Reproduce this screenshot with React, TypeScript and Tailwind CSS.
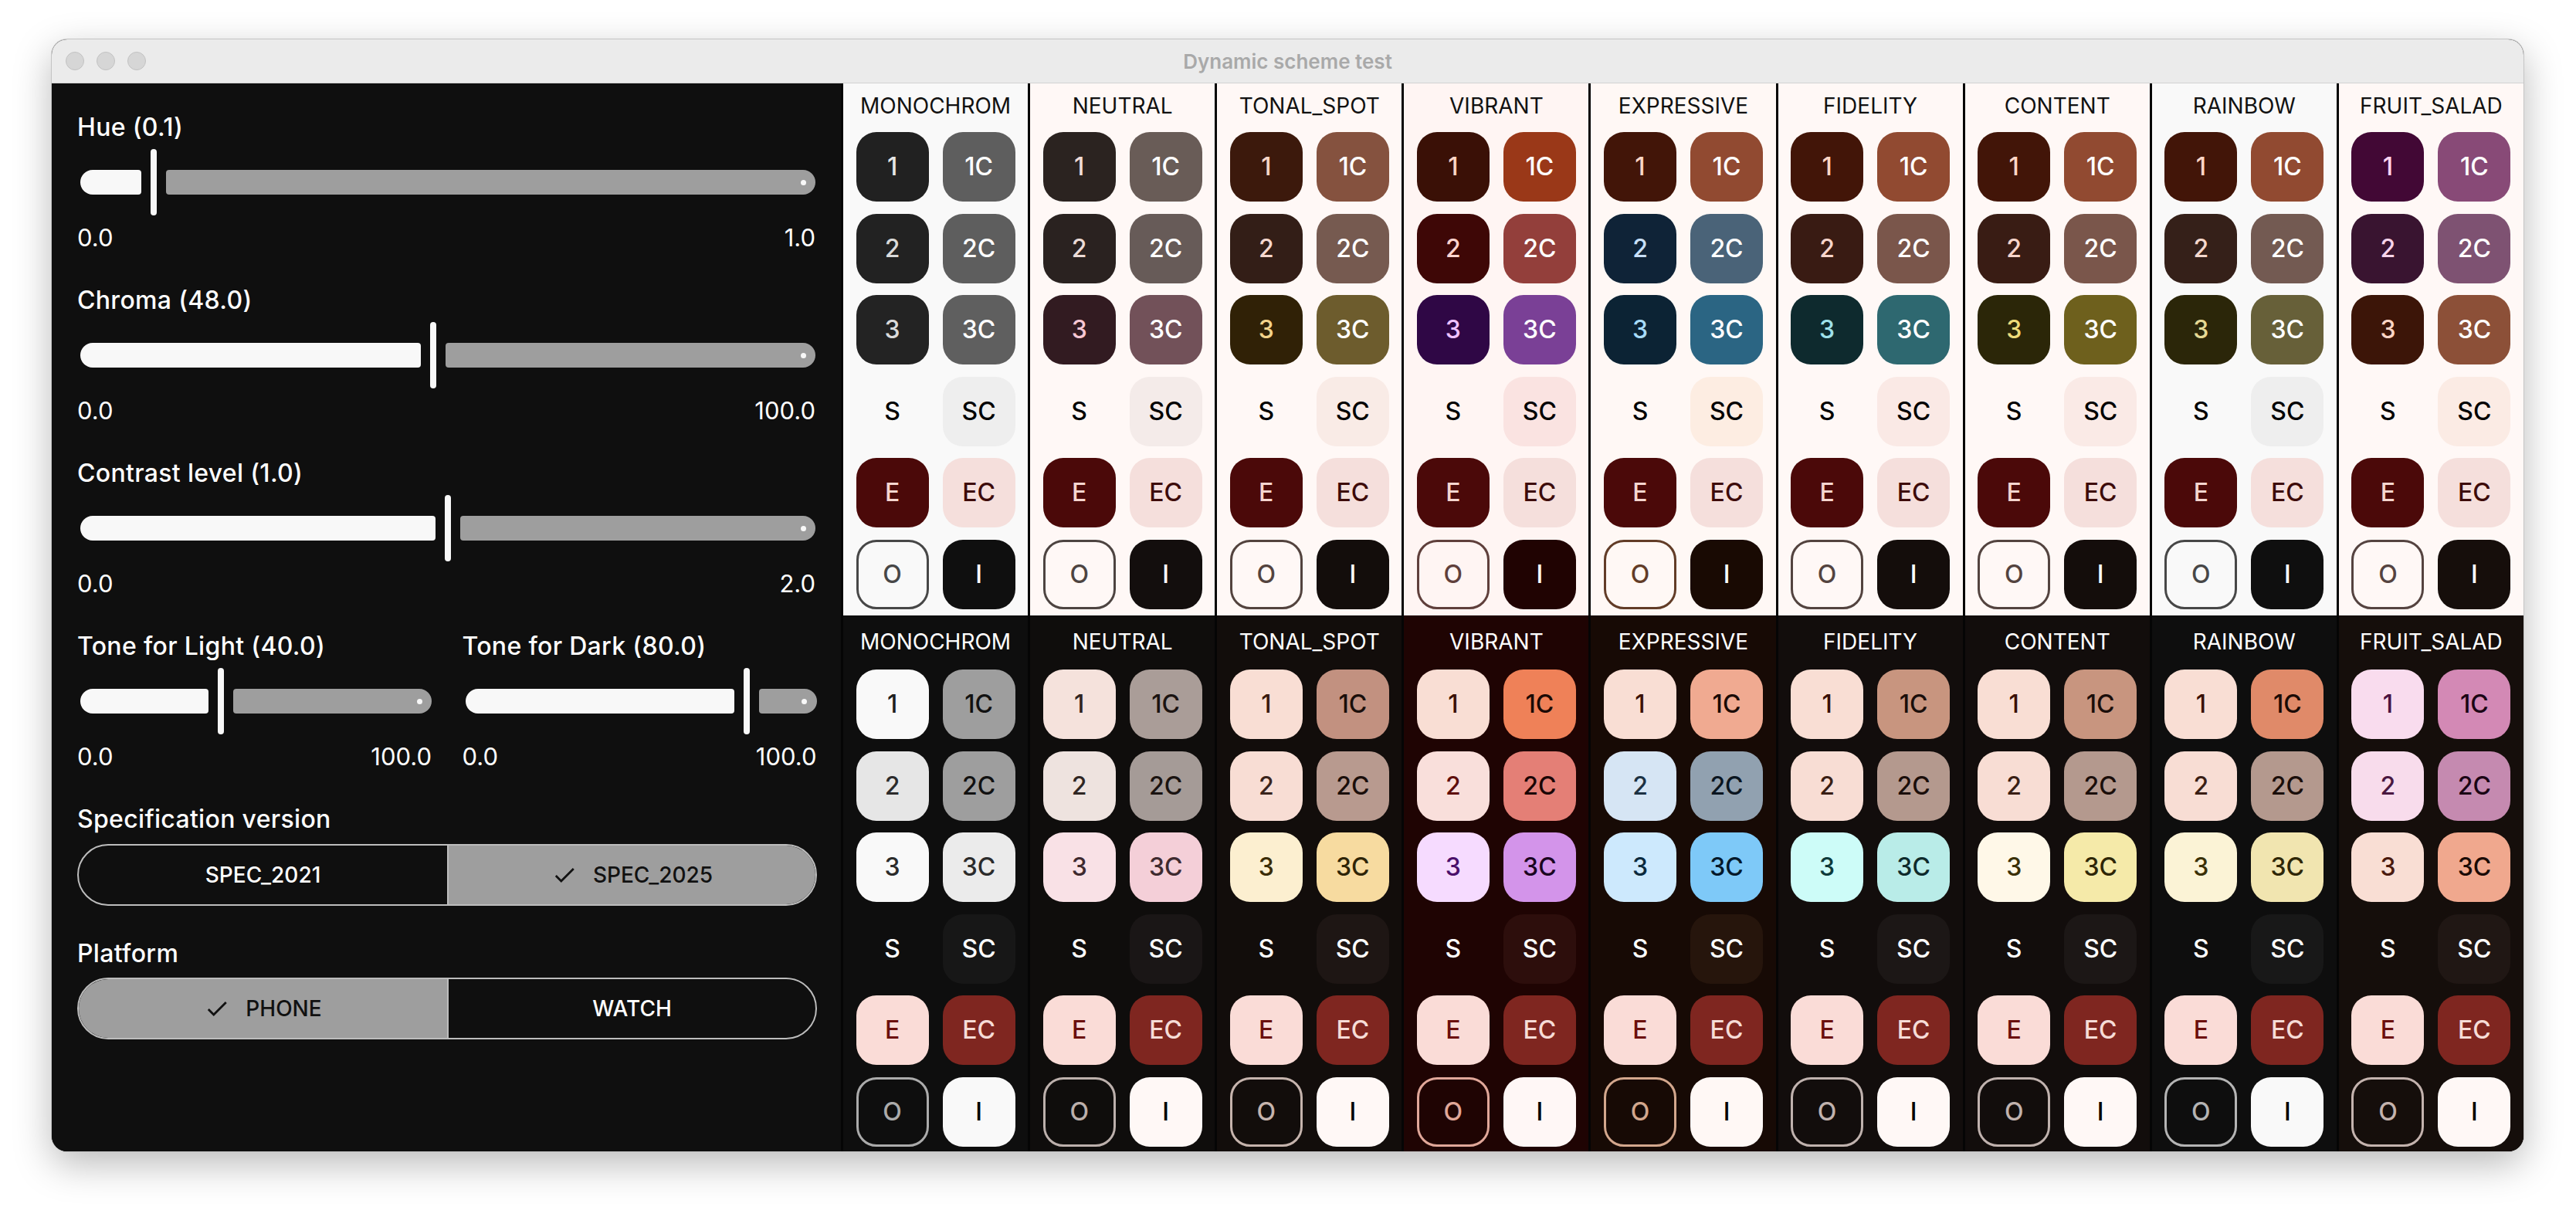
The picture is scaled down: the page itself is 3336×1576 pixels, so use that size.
type Scheme = {
  name: string;
  lightBg: string;
  darkBg: string;
  // 1, 1C, 2, 2C, 3, 3C, SC, O, I
  light: string[];
  dark: string[];
};

const SCHEMES: Scheme[] = [
  {
    name: 'MONOCHROM',
    lightBg: 'bg-[#f9f9f9]',
    darkBg: 'bg-[#0e0e0e]',
    light: [
      'bg-[#212121] text-[#e6e6e6]', 'bg-[#5e5e5e] text-white',
      'bg-[#222222] text-[#dadada]', 'bg-[#5e5e5e] text-white',
      'bg-[#232323] text-[#dadada]', 'bg-[#5f5f5f] text-white',
      'bg-[#eeeeee] text-black', 'border-[#474747] text-[#474747]', 'bg-[#0f0f0f] text-white',
    ],
    dark: [
      'bg-[#f9f9f9] text-[#1f1f1f]', 'bg-[#9e9e9e] text-[#111111]',
      'bg-[#e6e6e6] text-[#2b2b2b]', 'bg-[#9e9e9e] text-[#111111]',
      'bg-[#f9f9f9] text-[#2b2b2b]', 'bg-[#ebebeb] text-[#2b2b2b]',
      'bg-[#171717] text-white', 'border-[#ababab] text-[#ababab]', 'bg-[#f9f9f9] text-black',
    ],
  },
  {
    name: 'NEUTRAL',
    lightBg: 'bg-[#fff8f6]',
    darkBg: 'bg-[#0f0d0c]',
    light: [
      'bg-[#2b2320] text-[#f2ddd8]', 'bg-[#695c57] text-white',
      'bg-[#2a2220] text-[#ecdcd7]', 'bg-[#675b58] text-white',
      'bg-[#321b21] text-[#f7c7d3]', 'bg-[#725159] text-white',
      'bg-[#f4ebe9] text-black', 'border-[#4d4441] text-[#4d4441]', 'bg-[#130e0d] text-white',
    ],
    dark: [
      'bg-[#f5e2dc] text-[#2f2420]', 'bg-[#aa9d98] text-[#1a1311]',
      'bg-[#eee3df] text-[#2f2623]', 'bg-[#a59b97] text-[#1a1311]',
      'bg-[#f9e1e6] text-[#3e2a2f]', 'bg-[#f4cfd8] text-[#3e2a2f]',
      'bg-[#1a1616] text-white', 'border-[#bcb0ac] text-[#bcb0ac]', 'bg-[#fff8f6] text-black',
    ],
  },
  {
    name: 'TONAL_SPOT',
    lightBg: 'bg-[#fff8f6]',
    darkBg: 'bg-[#120d0b]',
    light: [
      'bg-[#3c190c] text-[#f9d7ca]', 'bg-[#85523f] text-white',
      'bg-[#331e17] text-[#f6d8ce]', 'bg-[#765a50] text-white',
      'bg-[#302106] text-[#f3d38a]', 'bg-[#6d5c2d] text-white',
      'bg-[#f9ebe6] text-black', 'border-[#53433e] text-[#53433e]', 'bg-[#130d0b] text-white',
    ],
    dark: [
      'bg-[#f9ded4] text-[#3a1a0e]', 'bg-[#c29180] text-[#1a0e0a]',
      'bg-[#f8ddd4] text-[#3a241c]', 'bg-[#b89a8f] text-[#1a0e0a]',
      'bg-[#fcefd0] text-[#3a2c06]', 'bg-[#f7dba0] text-[#2e2406]',
      'bg-[#1e1614] text-white', 'border-[#c6b4ad] text-[#c6b4ad]', 'bg-[#fff8f6] text-black',
    ],
  },
  {
    name: 'VIBRANT',
    lightBg: 'bg-[#fff5f3]',
    darkBg: 'bg-[#1f0403]',
    light: [
      'bg-[#3a1006] text-[#ffd5c6]', 'bg-[#9a3818] text-white',
      'bg-[#3e0706] text-[#ffd4ce]', 'bg-[#933f3b] text-white',
      'bg-[#2f0745] text-[#f0c2ff]', 'bg-[#7a4096] text-white',
      'bg-[#fae3e1] text-black', 'border-[#5f3f3b] text-[#5f3f3b]', 'bg-[#200302] text-white',
    ],
    dark: [
      'bg-[#f9ded4] text-[#3a1005]', 'bg-[#ef8158] text-[#1a0a05]',
      'bg-[#f9dfdb] text-[#5e0e0c]', 'bg-[#e47f76] text-[#1a0505]',
      'bg-[#f6dbff] text-[#4a0f6a]', 'bg-[#d394ea] text-[#1a0520]',
      'bg-[#2d0e0c] text-white', 'border-[#e0a799] text-[#e0a799]', 'bg-[#fff7f6] text-black',
    ],
  },
  {
    name: 'EXPRESSIVE',
    lightBg: 'bg-[#fff8f5]',
    darkBg: 'bg-[#170a05]',
    light: [
      'bg-[#421508] text-[#ffd6c6]', 'bg-[#914a31] text-white',
      'bg-[#0f2337] text-[#c8e0f8]', 'bg-[#4a6378] text-white',
      'bg-[#0c2334] text-[#a7dbf8]', 'bg-[#2b6583] text-white',
      'bg-[#fdede2] text-black', 'border-[#623c27] text-[#623c27]', 'bg-[#190a03] text-white',
    ],
    dark: [
      'bg-[#f9ded4] text-[#3a1005]', 'bg-[#f0aa91] text-[#1a0a05]',
      'bg-[#d6e5f4] text-[#1d3142]', 'bg-[#91a1b0] text-[#0a1520]',
      'bg-[#cde9fd] text-[#0c2a3d]', 'bg-[#7ec9f8] text-[#04182a]',
      'bg-[#26150c] text-white', 'border-[#d3a78d] text-[#d3a78d]', 'bg-[#fff8f5] text-black',
    ],
  },
  {
    name: 'FIDELITY',
    lightBg: 'bg-[#fff8f6]',
    darkBg: 'bg-[#120d0c]',
    light: [
      'bg-[#421508] text-[#ffd6c6]', 'bg-[#914a31] text-white',
      'bg-[#391b13] text-[#f7d5cb]', 'bg-[#7a564b] text-white',
      'bg-[#0e2a2e] text-[#9fe1ea]', 'bg-[#2e6870] text-white',
      'bg-[#fae9e5] text-black', 'border-[#53433f] text-[#53433f]', 'bg-[#140d0b] text-white',
    ],
    dark: [
      'bg-[#f9ded4] text-[#3a1005]', 'bg-[#c8957f] text-[#1a0e0a]',
      'bg-[#f8ddd4] text-[#3a1e14]', 'bg-[#b4998e] text-[#1a0e0a]',
      'bg-[#cdfcf8] text-[#0e3a3b]', 'bg-[#b9ece8] text-[#0e2a2b]',
      'bg-[#1c1716] text-white', 'border-[#c0b2ae] text-[#c0b2ae]', 'bg-[#fff8f6] text-black',
    ],
  },
  {
    name: 'CONTENT',
    lightBg: 'bg-[#fff8f6]',
    darkBg: 'bg-[#120d0c]',
    light: [
      'bg-[#421508] text-[#ffd6c6]', 'bg-[#914a31] text-white',
      'bg-[#391c14] text-[#f7d5cb]', 'bg-[#7a564b] text-white',
      'bg-[#2b2608] text-[#eedb79]', 'bg-[#6e601d] text-white',
      'bg-[#faeae6] text-black', 'border-[#53433f] text-[#53433f]', 'bg-[#140d0b] text-white',
    ],
    dark: [
      'bg-[#f9ded4] text-[#3a1005]', 'bg-[#c8957f] text-[#1a0e0a]',
      'bg-[#f8ddd4] text-[#3a1e14]', 'bg-[#b4998e] text-[#1a0e0a]',
      'bg-[#fff8e8] text-[#3a3006]', 'bg-[#f5eaa9] text-[#2e2606]',
      'bg-[#1c1716] text-white', 'border-[#c0b2ae] text-[#c0b2ae]', 'bg-[#fff8f6] text-black',
    ],
  },
  {
    name: 'RAINBOW',
    lightBg: 'bg-[#f9f9f9]',
    darkBg: 'bg-[#0e0e0e]',
    light: [
      'bg-[#421508] text-[#ffd6c6]', 'bg-[#914a31] text-white',
      'bg-[#352019] text-[#f5d8cd]', 'bg-[#735a52] text-white',
      'bg-[#2b2609] text-[#e5d995]', 'bg-[#676039] text-white',
      'bg-[#eeeeee] text-black', 'border-[#474747] text-[#474747]', 'bg-[#0f0f0f] text-white',
    ],
    dark: [
      'bg-[#f9ded4] text-[#3a1005]', 'bg-[#e08a69] text-[#1a0a05]',
      'bg-[#f8ddd4] text-[#3a1e14]', 'bg-[#b4998e] text-[#1a0e0a]',
      'bg-[#fbf3d6] text-[#3a3006]', 'bg-[#f1e5b0] text-[#2e2606]',
      'bg-[#181818] text-white', 'border-[#b4b4b4] text-[#b4b4b4]', 'bg-[#f9f9f9] text-black',
    ],
  },
  {
    name: 'FRUIT_SALAD',
    lightBg: 'bg-[#fff8f6]',
    darkBg: 'bg-[#150e0b]',
    light: [
      'bg-[#420835] text-[#ffd5f0]', 'bg-[#884a77] text-white',
      'bg-[#391430] text-[#f7d4eb]', 'bg-[#7e5272] text-white',
      'bg-[#3c1508] text-[#ffd6c6]', 'bg-[#8c5038] text-white',
      'bg-[#fbebe4] text-black', 'border-[#554340] text-[#554340]', 'bg-[#160e0b] text-white',
    ],
    dark: [
      'bg-[#f9dcee] text-[#4a1340]', 'bg-[#d389b5] text-[#1a0514]',
      'bg-[#f8dcec] text-[#4a1840]', 'bg-[#c58ab0] text-[#1a0514]',
      'bg-[#f9ded4] text-[#4a1a0e]', 'bg-[#f0a88e] text-[#1a0a05]',
      'bg-[#201714] text-white', 'border-[#c4b3ae] text-[#c4b3ae]', 'bg-[#fff8f6] text-black',
    ],
  },
];

function Chip({ label, cls, outline }: { label: string; cls: string; outline?: boolean }) {
  return (
    <div
      className={`flex items-center justify-center w-[94px] h-[90px] rounded-[26px] text-[32px] font-medium ${
        outline ? 'border-[3px]' : ''
      } ${cls}`}
    >
      {label}
    </div>
  );
}

function SchemeColumn({ s, dark }: { s: Scheme; dark: boolean }) {
  const c = dark ? s.dark : s.light;
  const rows: [string, string, string, string, boolean?][] = [
    ['1', c[0], '1C', c[1]],
    ['2', c[2], '2C', c[3]],
    ['3', c[4], '3C', c[5]],
    ['S', dark ? 'text-white' : 'text-black', 'SC', c[6]],
    [
      'E',
      dark ? 'bg-[#fadcd7] text-[#6b0f0c]' : 'bg-[#4b0909] text-[#f6d6d0]',
      'EC',
      dark ? 'bg-[#7f2620] text-[#f6dcd7]' : 'bg-[#f5dfdc] text-[#3d0b0a]',
    ],
    ['O', c[7], 'I', c[8], true],
  ];
  return (
    <div className={`flex-1 flex flex-col items-center ${dark ? `pt-[16px] ${s.darkBg}` : `pt-[11px] ${s.lightBg}`}`}>
      <div
        className={`h-[36px] leading-[36px] text-[28px] whitespace-nowrap ${dark ? 'text-white mb-[18px]' : 'text-[#111111] mb-[16px]'}`}
      >
        {s.name}
      </div>
      <div className="flex flex-col gap-[15.6px]">
        {rows.map(([a, ac, b, bc, outline]) => (
          <div key={a} className="flex gap-[18px]">
            <Chip label={a} cls={ac} outline={outline} />
            <Chip label={b} cls={bc} />
          </div>
        ))}
      </div>
    </div>
  );
}

function Slider({ frac, width }: { frac: number; width: number }) {
  const active = frac * width - 16;
  return (
    <div className="flex items-center h-[86px] ml-[4px]" style={{ width }}>
      <div className="h-[32px] shrink-0 bg-[#f8f8f8] rounded-l-[16px] rounded-r-[4px]" style={{ width: active }} />
      <div className="w-[8px] h-[86px] shrink-0 mx-[12px] rounded-full bg-[#f8f8f8]" />
      <div className="relative flex-1 h-[32px] bg-[#9e9e9e] rounded-l-[4px] rounded-r-[16px]">
        <div className="absolute right-[12.5px] top-[12.5px] w-[7px] h-[7px] rounded-full bg-[#f8f8f8]" />
      </div>
    </div>
  );
}

function SliderBlock({
  label,
  frac,
  width,
  min,
  max,
}: {
  label: string;
  frac: number;
  width: number;
  min: string;
  max: string;
}) {
  return (
    <div className="flex flex-col">
      <div className="h-[36px] leading-[36px] text-[32px] font-medium tracking-[0.01em] text-white mb-[10px]">{label}</div>
      <Slider frac={frac} width={width} />
      <div
        className="flex justify-between h-[36px] leading-[36px] text-[31px] text-white mt-[11px]"
        style={{ width: width + 4 }}
      >
        <span>{min}</span>
        <span>{max}</span>
      </div>
    </div>
  );
}

function Check() {
  return (
    <svg width="34" height="34" viewBox="0 0 24 24" className="shrink-0">
      <path d="M9 16.17 4.83 12l-1.42 1.41L9 19 21 7l-1.41-1.41z" fill="currentColor" />
    </svg>
  );
}

function Segmented({ options, selected }: { options: string[]; selected: number }) {
  return (
    <div className="flex h-[80px] rounded-full border-2 border-[#bdbdbd] overflow-hidden">
      {options.map((o, i) => (
        <div key={o} className="flex flex-1">
          {i > 0 && <div className="w-[2px] bg-[#bdbdbd]" />}
          <div
            className={`flex flex-1 items-center justify-center gap-[20px] text-[28px] font-medium ${
              i === selected ? 'bg-[#9e9e9e] text-[#111111]' : 'text-white'
            }`}
          >
            {i === selected && <Check />}
            <span>{o}</span>
          </div>
        </div>
      ))}
    </div>
  );
}

function ControlPanel() {
  return (
    <div className="w-[1022px] shrink-0 bg-[#0f0f0f] pl-[33px] pr-[31px] pt-[39px] flex flex-col gap-[45px]">
      <SliderBlock label="Hue (0.1)" frac={0.1} width={952} min="0.0" max="1.0" />
      <SliderBlock label="Chroma (48.0)" frac={0.48} width={952} min="0.0" max="100.0" />
      <SliderBlock label="Contrast level (1.0)" frac={0.5} width={952} min="0.0" max="2.0" />
      <div className="grid grid-cols-2 gap-[39px]">
        <SliderBlock label="Tone for Light (40.0)" frac={0.4} width={455} min="0.0" max="100.0" />
        <SliderBlock label="Tone for Dark (80.0)" frac={0.8} width={455} min="0.0" max="100.0" />
      </div>
      <div className="flex flex-col gap-[14px]">
        <div className="h-[36px] leading-[36px] text-[32px] font-medium tracking-[0.01em] text-white">
          Specification version
        </div>
        <Segmented options={['SPEC_2021', 'SPEC_2025']} selected={1} />
      </div>
      <div className="flex flex-col gap-[13px] -mt-[1px]">
        <div className="h-[36px] leading-[36px] text-[32px] font-medium tracking-[0.01em] text-white">Platform</div>
        <Segmented options={['PHONE', 'WATCH']} selected={0} />
      </div>
    </div>
  );
}

export default function App() {
  return (
    <div className="w-[3336px] h-[1576px] bg-white pl-[67px] pt-[51px] font-['Inter','Liberation_Sans',sans-serif]">
      <div className="w-[3201px] h-[1440px] rounded-[20px] overflow-hidden flex flex-col bg-black shadow-[0_16px_50px_rgba(0,0,0,0.28)] ring-1 ring-[#c4c4c4]">
        {/* title bar */}
        <div className="h-[57px] shrink-0 grid grid-cols-[1fr_auto_1fr] items-center bg-[#ebebeb] border-b border-[#d2d2d2]">
          <div className="flex gap-[16px] pl-[18px]">
            <div className="w-[24px] h-[24px] rounded-full bg-[#d6d6d6] border border-[#c2c2c2]" />
            <div className="w-[24px] h-[24px] rounded-full bg-[#d6d6d6] border border-[#c2c2c2]" />
            <div className="w-[24px] h-[24px] rounded-full bg-[#d6d6d6] border border-[#c2c2c2]" />
          </div>
          <div className="text-[26px] font-semibold text-[#a9a9a9]">Dynamic scheme test</div>
          <div />
        </div>

        <div className="flex flex-1 min-h-0">
          <ControlPanel />
          <div className="flex-1 flex flex-col pl-[3px] bg-[#050505]">
            <div className="h-[689px] flex gap-[3px]">
              {SCHEMES.map((s) => (
                <SchemeColumn key={s.name} s={s} dark={false} />
              ))}
            </div>
            <div className="flex-1 flex gap-[3px]">
              {SCHEMES.map((s) => (
                <SchemeColumn key={s.name} s={s} dark />
              ))}
            </div>
          </div>
        </div>
      </div>
    </div>
  );
}
